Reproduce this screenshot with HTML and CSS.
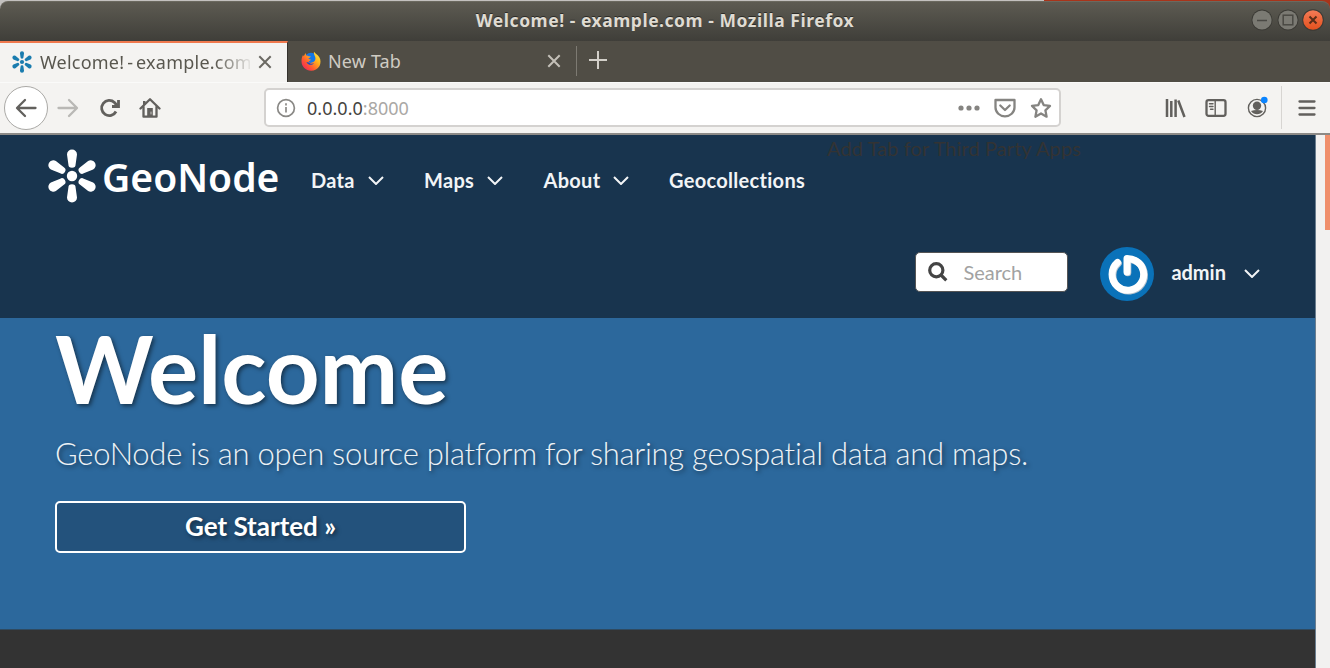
FILE: index.html
```html
<!DOCTYPE html>
<html lang="en">
<head>
<meta charset="utf-8">
<title>Welcome! - example.com</title>
<link rel="stylesheet" href="styles.css">
</head>
<body>
<div class="window">
  <div class="titlebar">
    <span class="title-text">Welcome! - example.com - Mozilla Firefox</span>
    <div class="window-buttons">
      <svg width="22" height="22" viewBox="0 0 22 22"><circle class="btn-ring" cx="11" cy="11" r="10.5"/><circle class="btn-grey" cx="11" cy="11" r="9.6"/><path class="btn-glyph" d="M6 11.5h10"/></svg>
      <svg width="22" height="22" viewBox="0 0 22 22"><circle class="btn-ring" cx="11" cy="11" r="10.5"/><circle class="btn-grey" cx="11" cy="11" r="9.6"/><rect class="btn-glyph" x="6.2" y="6.2" width="9.6" height="9.6"/></svg>
      <svg width="22" height="22" viewBox="0 0 22 22"><defs><linearGradient id="close" x2="0" y2="1"><stop offset="0" stop-color="#f47b56"/><stop offset="1" stop-color="#e4511e"/></linearGradient></defs><circle class="btn-ring" cx="11" cy="11" r="10.8"/><circle fill="url(#close)" cx="11" cy="11" r="9.8"/><path class="btn-glyph close-glyph" d="M7.5 7.5l7 7M14.5 7.5l-7 7"/></svg>
    </div>
  </div>

  <div class="tabs">
    <div class="tab active">
      <svg class="favicon" width="22" height="22" viewBox="0 0 54 54"><use href="#flower"/></svg>
      <span class="tab-label fade">Welcome! - example.com</span>
      <svg class="tab-close" width="14" height="14" viewBox="0 0 14 14"><path d="M1.3 1.3l11.4 11.4M12.7 1.3L1.3 12.7"/></svg>
    </div>
    <div class="tab second">
      <svg width="20" height="20" viewBox="0 0 20 20">
        <defs><linearGradient id="fox" x1="1" y1="0" x2="0" y2="1"><stop offset="0" stop-color="#fff44f"/><stop offset=".35" stop-color="#ffb21c"/><stop offset=".65" stop-color="#ff5a30"/><stop offset="1" stop-color="#f0106c"/></linearGradient></defs>
        <circle cx="10" cy="8.500" r="6.800" fill="#1377e8"/>
        <path fill="url(#fox)" d="M13 .8c1 1.600 3.800 3.100 5.300 5.400 1.700 2.600 1.500 6.300.2 8.800-1.700 3.100-4.900 4.700-8.400 4.700C4.800 19.700.5 15.500.5 10.300c0-2.500.4-4.500 1.500-6.300l.8 1.300L4.500 2l.8 2.400c1 0 2.100.3 2.900 1 .7-.2 1.500 0 1.500 0-.4 1-2 1.400-2.300 2.300.7.800 2.400.2 2.500 1.100-.4 1-1.800 1-2.300 2 .8 1.600 3.200 1.300 4.500.3 2.500-1 2.800-3.800 1.800-5.900C13.200 3.700 12.600 2.600 13 .8z"/>
        <path d="M5.500 11c1 3 5 4 7.500 1.300-2.200.8-3.700.6-5-.9z" fill="#1a4fc0"/>
      </svg>
      <span class="tab-label">New Tab</span>
      <svg class="tab-close" width="14" height="14" viewBox="0 0 14 14"><path d="M1.300 1.300l11.400 11.400M12.700 1.300L1.300 12.700"/></svg>
    </div>
    <svg class="new-tab" width="18" height="18" viewBox="0 0 18 18"><path d="M9 0v18M0 9h18"/></svg>
  </div>

  <div class="toolbar">
    <div class="back"><svg class="ico" width="22" height="20" viewBox="0 0 22 20"><path d="M20.500 10H2.500M10 2L2 10l8 8"/></svg></div>
    <svg class="ico forward" width="22" height="20" viewBox="0 0 22 20"><path d="M1.500 10h18M12 2l8 8-8 8"/></svg>
    <svg class="ico reload" width="22" height="20" viewBox="0 0 22 20"><path d="M17 13.500A7.600 7.600 0 1 1 15.500 4.500L18.500 8"/><path d="M19.500 2v6.500H13"/></svg>
    <svg class="ico home" width="22" height="22" viewBox="0 0 22 22"><path d="M1.500 11.500L11 2.200l9.500 9.300"/><path d="M4.500 10v9.700h13V10"/><path stroke="none" class="solid" d="M8.200 11h5.600v9H8.200zM4 4h2.500v4H4z"/><path class="knob" d="M12 15v2"/></svg>
    <div class="urlbar">
      <svg class="info" width="20" height="20" viewBox="0 0 20 20"><circle cx="10" cy="10" r="8.400"/><path d="M10 9v5.500M10 5.300v2.200"/></svg>
      <span class="url"><b>0.0.0.0</b>:8000</span>
      <svg class="dots" width="22" height="6" viewBox="0 0 22 6"><circle cx="3" cy="3" r="2.600"/><circle cx="11" cy="3" r="2.600"/><circle cx="19" cy="3" r="2.600"/></svg>
      <svg class="ico light pocket" width="22" height="20" viewBox="0 0 22 20"><path d="M1.500 2h19v7.500a9.500 8.800 0 0 1-19 0z"/><path d="M6.300 7.500L11 12l4.700-4.500"/></svg>
      <svg class="ico light star" width="22" height="22" viewBox="0 0 22 22"><path d="M11 2.200l2.700 5.900 6.300.8-4.600 4.400 1.200 6.400L11 16.500l-5.600 3.200 1.200-6.400L2 8.900l6.300-.8z"/></svg>
    </div>
    <svg class="ico library" width="22" height="20" viewBox="0 0 22 20"><path d="M2 1v18M6.300 3v16M10.600 1.500V19M13.300 2.500L19.500 19"/></svg>
    <svg class="ico sidebar" width="22" height="20" viewBox="0 0 22 20"><rect x="1.500" y="2.200" width="19" height="15.600" rx="2"/><path stroke-width="1.300" class="thin" d="M10.200 2v16M4.500 5.800h3.500M4.500 8.500h3.500M5.500 11.200h2.500"/></svg>
    <svg class="ico account" width="22" height="22" viewBox="0 0 22 22"><circle class="thin" cx="10" cy="12" r="8.600"/><circle class="fill-only" cx="10" cy="9.800" r="4.200"/><path class="fill-only" d="M4 15c3.500-1.200 8.500-1.200 12 0-2.800 4.400-9.200 4.400-12 0z"/><circle class="badge" cx="17.300" cy="4" r="3.300"/></svg>
    <div class="divider"></div>
    <svg class="ico menu" width="18" height="18" viewBox="0 0 18 18"><path d="M1.500 2.500h15M1.500 9h15M1.500 15.500h15"/></svg>
  </div>

  <div class="viewport">
    <div class="page">
      <header class="site-header">
        <div class="top-row">
          <a class="brand">
            <svg width="50" height="54" viewBox="2 0 50 54">
              <g id="flower">
                <circle cx="27" cy="27" r="5.200"/>
                <path id="petal" d="M22 5.500a5 5 0 0 1 10 0L30.600 15.500a3.600 3.300 0 0 1-7.200 0z"/>
                <use href="#petal" transform="rotate(60 27 27)"/><use href="#petal" transform="rotate(120 27 27)"/><use href="#petal" transform="rotate(180 27 27)"/><use href="#petal" transform="rotate(240 27 27)"/><use href="#petal" transform="rotate(300 27 27)"/>
              </g>
            </svg>
            <span class="brand-name">GeoNode</span>
          </a>
          <nav class="nav">
            <a>Data <svg class="chev" width="16" height="9" viewBox="0 0 16 9"><path d="M1 1l7 7 7-7"/></svg></a>
            <a>Maps <svg class="chev" width="16" height="9" viewBox="0 0 16 9"><path d="M1 1l7 7 7-7"/></svg></a>
            <a>About <svg class="chev" width="16" height="9" viewBox="0 0 16 9"><path d="M1 1l7 7 7-7"/></svg></a>
            <a>Geocollections</a>
          </nav>
          <span class="third-party">Add Tab for Third Party Apps</span>
        </div>
        <div class="user-row">
          <div class="search">
            <svg width="20" height="20" viewBox="0 0 20 20"><circle cx="8.300" cy="8.300" r="6.600"/><path d="M13 13l5.300 5.300"/></svg>
            <span>Search</span>
          </div>
          <svg class="avatar" width="54" height="54" viewBox="0 0 54 54"><circle cx="27" cy="27" r="27" fill="#0a72b9"/><path class="power shade" transform="translate(.8 .8)" d="M17.500 15.500A15.800 15.800 0 1 0 35.500 13.600Q32 11.500 27 11.500V25"/><path class="power" d="M17.500 15.500A15.800 15.800 0 1 0 35.500 13.600Q32 11.500 27 11.500V25"/></svg>
          <span class="user">admin</span>
          <svg class="chev" width="16" height="9" viewBox="0 0 16 9"><path d="M1 1l7 7 7-7"/></svg>
        </div>
      </header>
      <section class="hero">
        <h1>Welcome</h1>
        <p>GeoNode is an open source platform for sharing geospatial data and maps.</p>
        <a class="cta">Get Started »</a>
      </section>
      <div class="below"></div>
    </div>
    <div class="scrollbar"><div class="thumb"></div></div>
  </div>
</div>
</body>
</html>
```

FILE: styles.css
```css
* { box-sizing: border-box; }
body { margin: 0; font-family: Lato, sans-serif; overflow: hidden; }
svg { display: block; flex: none; }
.window {
  width: 1330px; height: 668px; padding-top: 1px;
  display: flex; flex-direction: column;
  background: linear-gradient(90deg, #c3c1bf 1044px, #a8341a 1044px);
}

.titlebar {
  height: 40px; display: flex; align-items: center; justify-content: center; position: relative;
  background: linear-gradient(#5d5b52, #3f3e39); padding-bottom: 3px;
  border-top: 1px solid #6b695f; border-radius: 8px 8px 0 0;
}
.title-text {
  font: bold 17.500px "Noto Sans", sans-serif; color: #dfdbd2;
  text-shadow: 0 -1px 0 #2c2b27; white-space: nowrap; letter-spacing: .53px;
}
.window-buttons { position: absolute; right: 6px; top: 7px; display: flex; gap: 3.500px; }
.btn-ring { fill: #3b3a35; }
.btn-grey { fill: #7b7a73; }
.btn-glyph { fill: none; stroke: #4a4944; stroke-width: 1.500; }
.close-glyph { stroke: #5a2d18; stroke-width: 2; }

.tabs { height: 41px; display: flex; background: #504d45; font: 18px "Noto Sans", sans-serif; }
.tab { display: flex; align-items: center; height: 41px; }
.tab.active {
  width: 288px; background: #f4f3f1; border-top: 2px solid #f0794e; border-right: 1px solid #34322d;
  color: #59574f; padding: 0 15px 2px 11px;
}
.favicon { fill: #1a7caf; margin-right: 7px; }
.tab-label { white-space: nowrap; }
.fade {
  width: 210px; overflow: hidden; word-spacing: -2px; letter-spacing: .22px;
  -webkit-mask-image: linear-gradient(90deg, #000 175px, transparent 214px);
  mask-image: linear-gradient(90deg, #000 175px, transparent 214px);
}
.tab-close { fill: none; stroke: #6b6963; stroke-width: 2; margin-left: auto; }
.tab.second { width: 289px; padding: 0 16px 1px 13px; color: #cfcbc3; position: relative; }
.tab.second::after { content: ""; position: absolute; right: 0; top: 5px; width: 1px; height: 30px; background: #7d7a72; }
.second .tab-label { margin-left: 7px; letter-spacing: .15px; }
.second .tab-close { stroke: #c4c0b8; }
.new-tab { fill: none; stroke: #d3d0c9; stroke-width: 2; margin: 10px 0 0 12px; }

.toolbar {
  height: 53px; display: flex; align-items: center; padding: 0 14px 1px 4px;
  background: #f4f3f1; border-top: 1px solid #fafaf9; border-bottom: 2px solid #8c8a87;
}
.ico { fill: none; stroke: #62605d; stroke-width: 2.300; stroke-linecap: round; stroke-linejoin: round; }
.ico.light { stroke: #858481; }
.ico .solid { fill: #62605d; }
.ico .thin { stroke-width: 1.400; }
.ico .fill-only { fill: #62605d; stroke: none; }
.ico .badge { fill: #0a84ff; stroke: none; }
.back {
  width: 44px; height: 44px; border: 1px solid #aaa9a6; border-radius: 50%; background: #fff;
  display: flex; align-items: center; justify-content: center;
}
.forward { margin-left: 9px; stroke: #b9b8b5; }
.reload { margin-left: 20px; stroke-linecap: butt; stroke-linejoin: miter; stroke-width: 2.800; }
.home { margin-left: 18px; }
.knob { stroke: #c9c7c4; stroke-width: 1; }
.urlbar {
  width: 797px; height: 39px; margin-left: 103px; padding: 0 7px 0 10px;
  display: flex; align-items: center; background: #fff; border: 2px solid #d4d2d0; border-radius: 5px;
}
.info { fill: none; stroke: #8a8986; stroke-width: 1.700; }
.url { margin-left: 11px; padding-top: 1px; font: 18px "Noto Sans", sans-serif; letter-spacing: .02px; color: #aaa8a5; }
.url b { font-weight: normal; color: #45433f; }
.dots { margin-left: auto; fill: #858481; }
.pocket { margin-left: 14px; }
.star { margin-left: 14px; }
.library { margin-left: 104px; stroke-linecap: butt; stroke-width: 2.500; }
.sidebar { margin-left: 18px; }
.account { margin-left: 20px; margin-bottom: 1px; }
.divider { width: 1px; height: 43px; margin-left: 12px; background: #d7d5d2; }
.menu { margin-left: auto; }

.viewport { flex: 1; display: flex; }
.page { width: 1316px; display: flex; flex-direction: column; border-right: 1px solid #6b7e8f; }
.scrollbar { width: 14px; background: #f2f1f0; display: flex; justify-content: flex-end; align-items: flex-start; }
.thumb { width: 5px; height: 95px; background: #f08f6c; }

.site-header { height: 183px; background: #18344e; color: #f2f4f6; }
.top-row { height: 90px; display: flex; align-items: flex-start; padding-left: 47px; }
.brand { display: flex; width: 264px; margin-top: 14px; fill: #fff; color: #fff; }
.brand-name { font: 600 39px/56px "Noto Sans", sans-serif; margin-left: 5px; letter-spacing: 0; }
.nav { display: grid; grid-template-columns: 113px 119.500px 125.500px 138px; margin-top: 32px; font-weight: bold; font-size: 20px; line-height: 26px; letter-spacing: .3px; }
.nav a { display: flex; align-items: center; gap: 13px; }
.chev { fill: none; stroke: currentColor; stroke-width: 2; }
.third-party { margin-left: 20px; font-size: 20px; line-height: 26px; letter-spacing: .1px; color: #333; white-space: nowrap; }
.user-row { height: 93px; display: flex; align-items: center; justify-content: flex-end; padding: 0 55px 0 0; }
.search {
  width: 153px; height: 40px; margin-right: 32px; padding-left: 12px; display: flex; align-items: center;
  background: #fff; border: 1px solid #555; border-radius: 5px; color: #a2a2a2; font-size: 20px;
}
.search svg { fill: none; stroke: #444; stroke-width: 3.200; margin-right: 15px; }
.avatar { margin-top: 5px; }
.power { fill: none; stroke: #fff; stroke-width: 7; stroke-linecap: round; stroke-linejoin: round; }
.power.shade { stroke: #b7c4cf; }
.user { margin: 0 18px 0 17px; font-size: 20px; font-weight: bold; }
.user + .chev { margin-top: 3px; }

.hero { height: 311px; background: #2c689c; padding: 0 55px; color: #fff; text-shadow: 2px 2px 4px rgba(0, 0, 0, .5); }
.hero h1 { margin: 0; padding-bottom: 4px; font-size: 94px; line-height: 100px; font-weight: bold; letter-spacing: -.1px; }
.hero p { margin: 12px 0 0; font-size: 31px; line-height: 38px; font-weight: 300; letter-spacing: -.28px; color: #edf2f6; white-space: nowrap; }
.cta {
  display: block; width: 411px; height: 52px; margin-top: 29px; border: 2px solid #fff; border-radius: 5px;
  background: #23527c; text-align: center; font-size: 26px; line-height: 47px; font-weight: bold;
}
.below { flex: 1; background: #333; border-top: 1px solid #2f4a60; }
```
